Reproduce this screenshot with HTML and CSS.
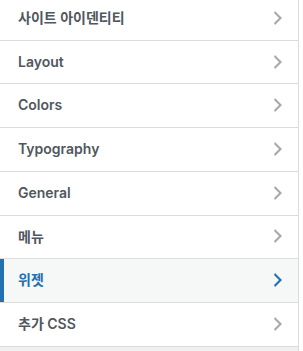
FILE: index.html
```html
<!DOCTYPE html>
<html lang="ko">
<head>
    <meta charset="UTF-8">
    <meta name="viewport" content="width=device-width, initial-scale=1.0">
    <title>사용자 정의하기</title>
    <link rel="stylesheet" href="styles.css">
</head>
<body>
    <div class="panel">
        <ul class="sections">
            <li class="section">
                <h3 class="section-title">사이트 아이덴티티
                    <svg class="arrow" viewBox="0 0 20 20"><path d="M6 15l5-5-5-5 1-2 7 7-7 7z"/></svg>
                </h3>
            </li>
            <li class="section">
                <h3 class="section-title">Layout
                    <svg class="arrow" viewBox="0 0 20 20"><path d="M6 15l5-5-5-5 1-2 7 7-7 7z"/></svg>
                </h3>
            </li>
            <li class="section">
                <h3 class="section-title">Colors
                    <svg class="arrow" viewBox="0 0 20 20"><path d="M6 15l5-5-5-5 1-2 7 7-7 7z"/></svg>
                </h3>
            </li>
            <li class="section">
                <h3 class="section-title">Typography
                    <svg class="arrow" viewBox="0 0 20 20"><path d="M6 15l5-5-5-5 1-2 7 7-7 7z"/></svg>
                </h3>
            </li>
            <li class="section">
                <h3 class="section-title">General
                    <svg class="arrow" viewBox="0 0 20 20"><path d="M6 15l5-5-5-5 1-2 7 7-7 7z"/></svg>
                </h3>
            </li>
            <li class="section">
                <h3 class="section-title">메뉴
                    <svg class="arrow" viewBox="0 0 20 20"><path d="M6 15l5-5-5-5 1-2 7 7-7 7z"/></svg>
                </h3>
            </li>
            <!-- Section survolée -->
            <li class="section active">
                <h3 class="section-title">위젯
                    <svg class="arrow" viewBox="0 0 20 20"><path d="M6 15l5-5-5-5 1-2 7 7-7 7z"/></svg>
                </h3>
            </li>
            <li class="section">
                <h3 class="section-title">추가 CSS
                    <svg class="arrow" viewBox="0 0 20 20"><path d="M6 15l5-5-5-5 1-2 7 7-7 7z"/></svg>
                </h3>
            </li>
        </ul>
    </div>
</body>
</html>
```

FILE: styles.css
```css
body {
    font-family: "Inter", "Noto Sans CJK KR", sans-serif;
    background-color: #fff;
    margin: 0;
    padding: 0;
}

.panel {
    width: 298px;
    min-height: 351px;
    background-color: #f0f0f1;
    border-right: 1px solid #dcdcde;
    overflow: hidden;
}

.sections {
    list-style: none;
    margin: -3px 0 0 0;
    padding: 0;
}

.section {
    background-color: #fff;
    border-bottom: 1px solid #dcdcde;
}

.section-title {
    display: flex;
    justify-content: space-between;
    align-items: center;
    margin: 0;
    padding: 10px 10px 11px 14px;
    border-left: 4px solid #fff;
    font-size: 14px;
    font-weight: 600;
    line-height: 21.7px;
    color: #50575e;
}

.arrow {
    width: 20px;
    height: 20px;
    fill: #a7aaad;
}

/* Section survolée */
.section.active .section-title {
    background-color: #f6f7f7;
    border-left-color: #2271b1;
    color: #2271b1;
}

.section.active .arrow {
    fill: #2271b1;
}
```
